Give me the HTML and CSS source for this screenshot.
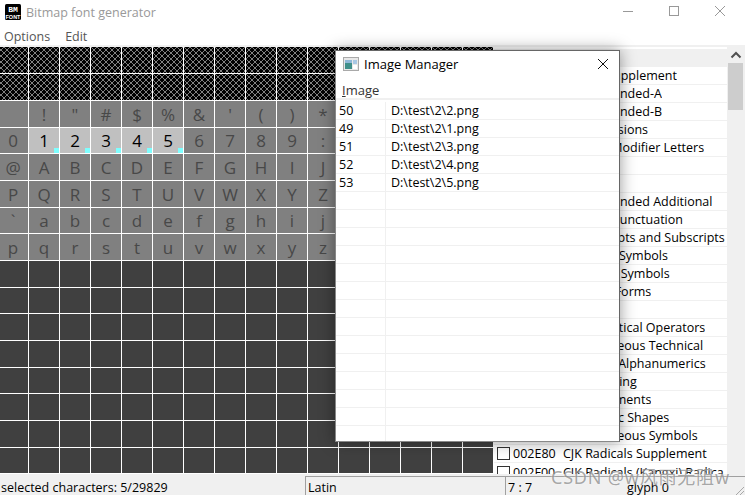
FILE: index.html
```
<!DOCTYPE html>
<html lang="en">
<head>
<meta charset="utf-8">
<title>Bitmap font generator</title>
<link rel="stylesheet" href="styles.css">
</head>
<body>
<div class="app">
  <header class="titlebar">
    <svg class="app-icon" width="16" height="16" viewBox="0 0 16 16"><rect width="16" height="16" rx="1.5" fill="#000"/><text x="8" y="7.5" class="logo-top" text-anchor="middle">BM</text><text x="8" y="14.5" class="logo-bottom" text-anchor="middle">FONT</text></svg>
    <span class="app-title">Bitmap font generator</span>
    <div class="win-controls">
      <svg class="ctl" width="46" height="24" viewBox="0 0 46 24"><path d="M18 11.5h10" stroke="#999" fill="none"/></svg>
      <svg class="ctl" width="46" height="24" viewBox="0 0 46 24"><rect x="18.5" y="6.5" width="9" height="9" stroke="#999" fill="none"/></svg>
      <svg class="ctl" width="46" height="24" viewBox="0 0 46 24"><path d="M18 6l10 10M28 6L18 16" stroke="#999" fill="none"/></svg>
    </div>
  </header>
  <nav class="menubar"><span>Options</span><span>Edit</span></nav>
  <main class="main">
    <div class="chars">
      <div class="c h"></div><div class="c h"></div><div class="c h"></div><div class="c h"></div><div class="c h"></div><div class="c h"></div><div class="c h"></div><div class="c h"></div><div class="c h"></div><div class="c h"></div><div class="c h"></div><div class="c h"></div><div class="c h"></div><div class="c h"></div><div class="c h"></div><div class="c h"></div>
      <div class="c h"></div><div class="c h"></div><div class="c h"></div><div class="c h"></div><div class="c h"></div><div class="c h"></div><div class="c h"></div><div class="c h"></div><div class="c h"></div><div class="c h"></div><div class="c h"></div><div class="c h"></div><div class="c h"></div><div class="c h"></div><div class="c h"></div><div class="c h"></div>
      <div class="c"></div><div class="c">!</div><div class="c">"</div><div class="c">#</div><div class="c">$</div><div class="c">%</div><div class="c">&amp;</div><div class="c">'</div><div class="c">(</div><div class="c">)</div><div class="c">*</div><div class="c">+</div><div class="c">,</div><div class="c">-</div><div class="c">.</div><div class="c">/</div>
      <div class="c">0</div><div class="c s">1</div><div class="c s">2</div><div class="c s">3</div><div class="c s">4</div><div class="c s">5</div><div class="c">6</div><div class="c">7</div><div class="c">8</div><div class="c">9</div><div class="c">:</div><div class="c">;</div><div class="c">&lt;</div><div class="c">=</div><div class="c">&gt;</div><div class="c">?</div>
      <div class="c">@</div><div class="c">A</div><div class="c">B</div><div class="c">C</div><div class="c">D</div><div class="c">E</div><div class="c">F</div><div class="c">G</div><div class="c">H</div><div class="c">I</div><div class="c">J</div><div class="c">K</div><div class="c">L</div><div class="c">M</div><div class="c">N</div><div class="c">O</div>
      <div class="c">P</div><div class="c">Q</div><div class="c">R</div><div class="c">S</div><div class="c">T</div><div class="c">U</div><div class="c">V</div><div class="c">W</div><div class="c">X</div><div class="c">Y</div><div class="c">Z</div><div class="c">[</div><div class="c">\</div><div class="c">]</div><div class="c">^</div><div class="c">_</div>
      <div class="c">`</div><div class="c">a</div><div class="c">b</div><div class="c">c</div><div class="c">d</div><div class="c">e</div><div class="c">f</div><div class="c">g</div><div class="c">h</div><div class="c">i</div><div class="c">j</div><div class="c">k</div><div class="c">l</div><div class="c">m</div><div class="c">n</div><div class="c">o</div>
      <div class="c">p</div><div class="c">q</div><div class="c">r</div><div class="c">s</div><div class="c">t</div><div class="c">u</div><div class="c">v</div><div class="c">w</div><div class="c">x</div><div class="c">y</div><div class="c">z</div><div class="c">{</div><div class="c">|</div><div class="c">}</div><div class="c">~</div><div class="c"></div>
      <div class="c d"></div><div class="c d"></div><div class="c d"></div><div class="c d"></div><div class="c d"></div><div class="c d"></div><div class="c d"></div><div class="c d"></div><div class="c d"></div><div class="c d"></div><div class="c d"></div><div class="c d"></div><div class="c d"></div><div class="c d"></div><div class="c d"></div><div class="c d"></div>
      <div class="c d"></div><div class="c d"></div><div class="c d"></div><div class="c d"></div><div class="c d"></div><div class="c d"></div><div class="c d"></div><div class="c d"></div><div class="c d"></div><div class="c d"></div><div class="c d"></div><div class="c d"></div><div class="c d"></div><div class="c d"></div><div class="c d"></div><div class="c d"></div>
      <div class="c d"></div><div class="c d"></div><div class="c d"></div><div class="c d"></div><div class="c d"></div><div class="c d"></div><div class="c d"></div><div class="c d"></div><div class="c d"></div><div class="c d"></div><div class="c d"></div><div class="c d"></div><div class="c d"></div><div class="c d"></div><div class="c d"></div><div class="c d"></div>
      <div class="c d"></div><div class="c d"></div><div class="c d"></div><div class="c d"></div><div class="c d"></div><div class="c d"></div><div class="c d"></div><div class="c d"></div><div class="c d"></div><div class="c d"></div><div class="c d"></div><div class="c d"></div><div class="c d"></div><div class="c d"></div><div class="c d"></div><div class="c d"></div>
      <div class="c d"></div><div class="c d"></div><div class="c d"></div><div class="c d"></div><div class="c d"></div><div class="c d"></div><div class="c d"></div><div class="c d"></div><div class="c d"></div><div class="c d"></div><div class="c d"></div><div class="c d"></div><div class="c d"></div><div class="c d"></div><div class="c d"></div><div class="c d"></div>
      <div class="c d"></div><div class="c d"></div><div class="c d"></div><div class="c d"></div><div class="c d"></div><div class="c d"></div><div class="c d"></div><div class="c d"></div><div class="c d"></div><div class="c d"></div><div class="c d"></div><div class="c d"></div><div class="c d"></div><div class="c d"></div><div class="c d"></div><div class="c d"></div>
      <div class="c d"></div><div class="c d"></div><div class="c d"></div><div class="c d"></div><div class="c d"></div><div class="c d"></div><div class="c d"></div><div class="c d"></div><div class="c d"></div><div class="c d"></div><div class="c d"></div><div class="c d"></div><div class="c d"></div><div class="c d"></div><div class="c d"></div><div class="c d"></div>
      <div class="c d"></div><div class="c d"></div><div class="c d"></div><div class="c d"></div><div class="c d"></div><div class="c d"></div><div class="c d"></div><div class="c d"></div><div class="c d"></div><div class="c d"></div><div class="c d"></div><div class="c d"></div><div class="c d"></div><div class="c d"></div><div class="c d"></div><div class="c d"></div>
    </div>
    <div class="blocks">
      <ul class="block-list">
        <li class="sel"><i class="box"></i><span class="code">000000</span><span class="name">Latin</span></li>
        <li><i class="box"></i><span class="code">000080</span><span class="name">Latin-1 Supplement</span></li>
        <li><i class="box"></i><span class="code">000100</span><span class="name">Latin Extended-A</span></li>
        <li><i class="box"></i><span class="code">000180</span><span class="name">Latin Extended-B</span></li>
        <li><i class="box"></i><span class="code">000250</span><span class="name">IPA Extensions</span></li>
        <li><i class="box"></i><span class="code">0002B0</span><span class="name">Spacing Modifier Letters</span></li>
        <li><i class="box"></i><span class="code">000370</span><span class="name">Greek</span></li>
        <li><i class="box"></i><span class="code">000400</span><span class="name">Cyrillic</span></li>
        <li><i class="box"></i><span class="code">001E00</span><span class="name">Latin Extended Additional</span></li>
        <li><i class="box"></i><span class="code">002000</span><span class="name">General Punctuation</span></li>
        <li><i class="box"></i><span class="code">002070</span><span class="name">Superscripts and Subscripts</span></li>
        <li><i class="box"></i><span class="code">0020A0</span><span class="name">Currency Symbols</span></li>
        <li><i class="box"></i><span class="code">002100</span><span class="name">Letterlike Symbols</span></li>
        <li><i class="box"></i><span class="code">002150</span><span class="name">Number Forms</span></li>
        <li><i class="box"></i><span class="code">002190</span><span class="name">Arrows</span></li>
        <li><i class="box"></i><span class="code">002200</span><span class="name">Mathematical Operators</span></li>
        <li><i class="box"></i><span class="code">002300</span><span class="name">Miscellaneous Technical</span></li>
        <li><i class="box"></i><span class="code">002460</span><span class="name">Enclosed Alphanumerics</span></li>
        <li><i class="box"></i><span class="code">002500</span><span class="name">Box Drawing</span></li>
        <li><i class="box"></i><span class="code">002580</span><span class="name">Block Elements</span></li>
        <li><i class="box"></i><span class="code">0025A0</span><span class="name">Geometric Shapes</span></li>
        <li><i class="box"></i><span class="code">002600</span><span class="name">Miscellaneous Symbols</span></li>
        <li><i class="box"></i><span class="code">002E80</span><span class="name">CJK Radicals Supplement</span></li>
        <li class="wide"><i class="box"></i><span class="code">002F00</span><span class="name">CJK Radicals (Kangxi) Radica…</span></li>
      </ul>
      <div class="scrollbar">
        <svg class="arrow" width="18" height="16" viewBox="0 0 18 16"><path d="M4.5 10.5L9 6l4.500 4.500" stroke="#505050" stroke-width="2" fill="none"/></svg>
        <div class="thumb"></div>
      </div>
    </div>
  </main>
  <footer class="statusbar">
    <div class="st st-sel">selected characters: 5/29829</div>
    <div class="st st-block">Latin</div>
    <div class="st st-pos">7 : 7</div>
    <div class="st st-glyph">glyph 0</div>
    <svg class="grip" width="12" height="12" viewBox="0 0 12 12"><path d="M11 2L2 11M11 6L6 11M11 10L10 11" stroke="#a8a8a8" fill="none"/></svg>
  </footer>
</div>
<section class="manager">
  <header class="mgr-title">
    <svg width="16" height="14" viewBox="0 0 16 14"><rect x=".5" y=".5" width="15" height="13" fill="#e8e8e8" stroke="#a9a9a9"/><rect x="2" y="3" width="7" height="9" fill="#3f8f8a"/><rect x="2" y="3" width="7" height="3" fill="#8fb8d8"/><rect x="10" y="3" width="4" height="4" fill="#a8c8e4"/><rect x="10" y="8" width="4" height="4" fill="#fff"/></svg>
    <span class="mgr-name">Image Manager</span>
    <svg class="mgr-close" width="12" height="12" viewBox="0 0 12 12"><path d="M1 1l10 10M11 1L1 11" stroke="#111" fill="none"/></svg>
  </header>
  <nav class="mgr-menu"><span><u>I</u>mage</span></nav>
  <div class="mgr-rows">
    <div class="row"><span class="id">50</span><span class="path">D:\test\2\2.png</span></div>
    <div class="row"><span class="id">49</span><span class="path">D:\test\2\1.png</span></div>
    <div class="row"><span class="id">51</span><span class="path">D:\test\2\3.png</span></div>
    <div class="row"><span class="id">52</span><span class="path">D:\test\2\4.png</span></div>
    <div class="row"><span class="id">53</span><span class="path">D:\test\2\5.png</span></div>
    <div class="row"><span class="id"></span><span class="path"></span></div>
    <div class="row"><span class="id"></span><span class="path"></span></div>
    <div class="row"><span class="id"></span><span class="path"></span></div>
    <div class="row"><span class="id"></span><span class="path"></span></div>
    <div class="row"><span class="id"></span><span class="path"></span></div>
    <div class="row"><span class="id"></span><span class="path"></span></div>
    <div class="row"><span class="id"></span><span class="path"></span></div>
    <div class="row"><span class="id"></span><span class="path"></span></div>
    <div class="row"><span class="id"></span><span class="path"></span></div>
    <div class="row"><span class="id"></span><span class="path"></span></div>
    <div class="row"><span class="id"></span><span class="path"></span></div>
    <div class="row"><span class="id"></span><span class="path"></span></div>
    <div class="row"><span class="id"></span><span class="path"></span></div>
    <div class="row"><span class="id"></span><span class="path"></span></div>
  </div>
</section>
<div class="watermark">CSDN @w风雨无阻w</div>
</body>
</html>
```
FILE: styles.css
```
* { box-sizing: border-box; }
html, body { margin: 0; padding: 0; }
body {
  position: relative;
  width: 745px;
  height: 495px;
  overflow: hidden;
  background: #fff;
  font-family: "Open Sans", "Noto Sans", sans-serif;
  font-size: 12.5px;
  color: #000;
}
.app { display: flex; flex-direction: column; height: 495px; }

.titlebar { display: flex; align-items: center; height: 24px; flex: none; padding-left: 5px; }
.app-icon { margin-top: -1px; }
.logo-top { font: bold 8px "Liberation Mono", monospace; fill: #fff; }
.logo-bottom { font: bold 5.500px "Liberation Sans", sans-serif; fill: #fff; }
.app-title { margin-left: 5px; font-size: 12.5px; color: #999; }
.win-controls { display: flex; margin-left: auto; margin-right: 2px; }
.ctl { display: block; }

.menubar { display: flex; gap: 15px; height: 23px; flex: none; padding: 4px 0 0 4px; color: #555; font-size: 12.5px; border-bottom: 2px solid #f0f0f0; line-height: 17px; }

.main { display: flex; flex: none; height: 427px; overflow: hidden; }
.chars {
  display: grid;
  flex: none;
  width: 496px;
  margin-left: -2px;
  grid-template-columns: repeat(16, 31px);
  grid-template-rows: 27px repeat(5, 27px 27px 26px);
}
.c {
  position: relative;
  display: flex;
  align-items: center;
  justify-content: center;
  background: #808080;
  border-right: 1px solid #fff;
  border-bottom: 1px solid #fff;
  color: #484848;
  font-size: 17px;
  line-height: 1;
}
.h {
  background-color: #000;
  background-image:
    linear-gradient(45deg, transparent 44%, #808080 44%, #808080 56%, transparent 56%),
    linear-gradient(-45deg, transparent 44%, #808080 44%, #808080 56%, transparent 56%);
  background-size: 6px 6px;
}
.d { background: #404040; }
.s { background: #c0c0c0; color: #000; }
.s::after { content: ""; position: absolute; right: 0; bottom: 0; width: 5px; height: 5px; background: #7fffff; }

.blocks { display: flex; flex: 1; min-width: 0; }
.block-list { list-style: none; margin: 2px 0 0 0; padding: 0; width: 233px; flex: none; }
.block-list li { display: flex; align-items: center; height: 18px; padding-left: 3px; border-bottom: 1px solid #f0f0f0; white-space: nowrap; overflow: hidden; font-size: 12.5px; }
.block-list li.sel { background: #f0f0f0; }
.block-list li.wide { position: relative; z-index: 1; margin-right: -12px; border-bottom: 0; }
.box { flex: none; width: 13px; height: 13px; border: 1px solid #333; background: #fff; }
.code { margin-left: 3px; width: 50px; flex: none; }
.name { overflow: hidden; text-overflow: ellipsis; min-width: 0; }
.scrollbar { flex: none; width: 18px; background: #f0f0f0; }
.arrow { display: block; }
.thumb { width: 15px; height: 47px; margin-left: 1px; background: #cdcdcd; }

.statusbar { position: relative; display: flex; flex: 1; background: #f0f0f0; padding-top: 2px; line-height: 18px; font-size: 12.5px; white-space: nowrap; }
.st { padding-left: 2px; padding-top: 2px; border-left: 1px solid #a0a0a0; border-top: 1px solid #a0a0a0; overflow: hidden; }
.st-sel { width: 305px; padding-left: 0; border-color: transparent; }
.st-block { width: 200px; }
.st-pos { width: 120px; }
.st-glyph { flex: 1; border-left: 0; border-color: #a0a0a0; }
.grip { position: absolute; right: 0; bottom: 0; }

.manager {
  position: absolute;
  left: 335px;
  top: 50px;
  width: 285px;
  height: 392px;
  display: flex;
  flex-direction: column;
  background: #fff;
  border: 1px solid #666;
  border-left-color: #888;
  border-bottom-color: #888;
  box-shadow: 0 0 15px rgba(0, 0, 0, .4);
}
.mgr-title { display: flex; align-items: center; height: 25px; flex: none; padding: 0 10px 0 7px; }
.mgr-name { margin-left: 5px; font-size: 13px; }
.mgr-close { margin-left: auto; }
.mgr-menu { height: 24px; flex: none; padding: 5px 0 0 6px; font-size: 13px; line-height: 18px; border-bottom: 2px solid #f0f0f0; color: #333; }
.mgr-rows { flex: 1; min-height: 0; margin-top: 2px; overflow: hidden; }
.row { display: flex; height: 18px; border-bottom: 1px solid #f0f0f0; line-height: 17px; font-size: 12.5px; }
.id { width: 50px; flex: none; padding-left: 3px; border-right: 1px solid #f0f0f0; }
.path { padding-left: 5px; }

.watermark {
  position: absolute;
  left: 551px;
  top: 466px;
  z-index: 2;
  font-family: "Noto Sans", "Noto Sans CJK SC", sans-serif;
  font-size: 18px;
  letter-spacing: .8px;
  line-height: 22px;
  color: rgba(120, 120, 120, .65);
  text-shadow: 0 0 2px rgba(255, 255, 255, .7);
  white-space: nowrap;
}
```
